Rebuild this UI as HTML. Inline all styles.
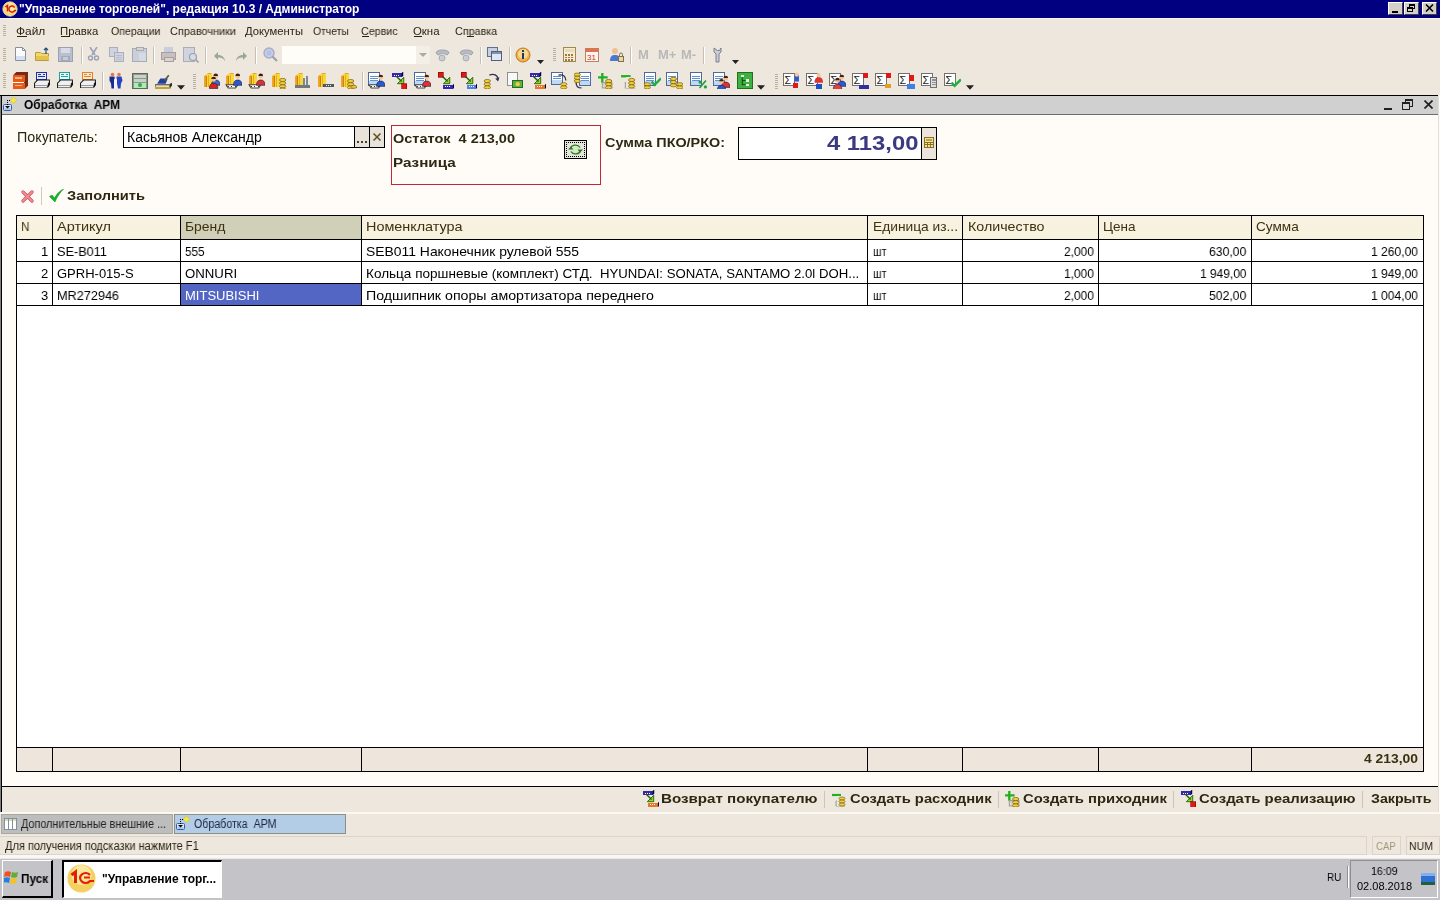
<!DOCTYPE html>
<html><head><meta charset="utf-8"><title>1C</title>
<style>
*{margin:0;padding:0;box-sizing:border-box}
html,body{width:1440px;height:900px;overflow:hidden}
body{position:relative;background:#eee7dd;font-family:'Liberation Sans',sans-serif}
.a{position:absolute;display:block}
.t{position:absolute;white-space:pre;font-family:'Liberation Sans',sans-serif;will-change:transform}
</style></head><body>
<div class="a" style="left:0px;top:0px;width:1440px;height:18px;background:#000080"></div>
<svg class="a" style="left:2px;top:1px" width="16" height="16" viewBox="0 0 16 16"><circle cx="8" cy="8" r="7.2" fill="#f6d878" stroke="#e8e0c0" stroke-width="0.8"/><circle cx="8" cy="7" r="5" fill="#fbe9a8"/><path d="M3.5 6l2-1.5v6" fill="none" stroke="#d02000" stroke-width="1.6"/><path d="M12.5 6.5a3 3 0 1 0 0 3h1.5" fill="none" stroke="#e01800" stroke-width="1.5"/></svg>
<div class="a" style="left:1388px;top:2px;width:15px;height:13px;background:#d4d0c8;border-top:1px solid #fff;border-left:1px solid #fff;border-right:1px solid #404040;border-bottom:1px solid #404040;box-sizing:border-box"></div>
<div class="a" style="left:1404px;top:2px;width:15px;height:13px;background:#d4d0c8;border-top:1px solid #fff;border-left:1px solid #fff;border-right:1px solid #404040;border-bottom:1px solid #404040;box-sizing:border-box"></div>
<div class="a" style="left:1422px;top:2px;width:15px;height:13px;background:#d4d0c8;border-top:1px solid #fff;border-left:1px solid #fff;border-right:1px solid #404040;border-bottom:1px solid #404040;box-sizing:border-box"></div>
<div class="a" style="left:1392px;top:11px;width:6px;height:2px;background:#000"></div>
<div class="a" style="left:1409px;top:4px;width:6px;height:5px;border:1px solid #000;border-top-width:2px;box-sizing:border-box;background:#d4d0c8"></div>
<div class="a" style="left:1407px;top:7px;width:6px;height:5px;border:1px solid #000;border-top-width:2px;box-sizing:border-box;background:#d4d0c8"></div>
<svg class="a" style="left:1425px;top:4px" width="9" height="8" viewBox="0 0 9 8"><path d="M1 0.5l7 7M8 0.5l-7 7" stroke="#000" stroke-width="1.6"/></svg>
<div class="a" style="left:0px;top:18px;width:1440px;height:77px;background:#eee7dd"></div>
<div class="a" style="left:0px;top:18px;width:1440px;height:1px;background:#f8f4ee"></div>
<div class="a" style="left:3px;top:25px;width:3px;height:1px;background:#b8b0a0"></div><div class="a" style="left:3px;top:27px;width:3px;height:1px;background:#b8b0a0"></div><div class="a" style="left:3px;top:29px;width:3px;height:1px;background:#b8b0a0"></div><div class="a" style="left:3px;top:31px;width:3px;height:1px;background:#b8b0a0"></div><div class="a" style="left:3px;top:33px;width:3px;height:1px;background:#b8b0a0"></div><div class="a" style="left:3px;top:35px;width:3px;height:1px;background:#b8b0a0"></div>
<div class="a" style="left:17px;top:36px;width:10px;height:1px;background:#2b2414"></div>
<div class="a" style="left:61px;top:36px;width:9px;height:1px;background:#2b2414"></div>
<div class="a" style="left:362px;top:36px;width:7px;height:1px;background:#2b2414"></div>
<div class="a" style="left:414px;top:36px;width:8px;height:1px;background:#2b2414"></div>
<div class="a" style="left:467px;top:36px;width:7px;height:1px;background:#2b2414"></div>
<div class="a" style="left:3px;top:48px;width:3px;height:1px;background:#b8b0a0"></div><div class="a" style="left:3px;top:50px;width:3px;height:1px;background:#b8b0a0"></div><div class="a" style="left:3px;top:52px;width:3px;height:1px;background:#b8b0a0"></div><div class="a" style="left:3px;top:54px;width:3px;height:1px;background:#b8b0a0"></div><div class="a" style="left:3px;top:56px;width:3px;height:1px;background:#b8b0a0"></div><div class="a" style="left:3px;top:58px;width:3px;height:1px;background:#b8b0a0"></div><div class="a" style="left:3px;top:60px;width:3px;height:1px;background:#b8b0a0"></div>
<svg class="a" style="left:14px;top:47px" width="15" height="15" viewBox="0 0 15 15"><path d="M1.5 .5h7l3 3v10h-10z" fill="#fafcff" stroke="#8a8f9c" stroke-width="1" /><rect x="2" y="9" width="9" height="4" fill="#d6e0f4" shape-rendering="crispEdges"/><path d="M8.5 .5v3h3" fill="none" stroke="#8a8f9c" stroke-width="1" /></svg>
<svg class="a" style="left:35px;top:47px" width="15" height="15" viewBox="0 0 15 15"><path d="M.5 5.5h5l1 1h7v7h-13z" fill="#efd870" stroke="#b89a40" stroke-width="1" /><rect x="1" y="9" width="13" height="4" fill="#e6c24a" shape-rendering="crispEdges"/><path d="M11 1v6M9 3l2-2 2 2" fill="none" stroke="#2a4a7a" stroke-width="1.2" /></svg>
<svg class="a" style="left:58px;top:47px" width="15" height="15" viewBox="0 0 15 15"><rect x="0.5" y="0.5" width="14" height="14" fill="#b9bfcc" stroke="#9aa2b2" stroke-width="1" shape-rendering="crispEdges"/><rect x="3" y="1" width="9" height="5" fill="#d8dce6" shape-rendering="crispEdges"/><rect x="3" y="9" width="9" height="5" fill="#a4abba" shape-rendering="crispEdges"/><rect x="5" y="10" width="5" height="3" fill="#c8ccd6" shape-rendering="crispEdges"/></svg>
<div class="a" style="left:81px;top:47px;width:1px;height:17px;background:#c8c0b4"></div><div class="a" style="left:82px;top:47px;width:1px;height:17px;background:#fff"></div>
<svg class="a" style="left:87px;top:47px" width="15" height="15" viewBox="0 0 15 15"><path d="M3 0l5 8M10 0L5 8" fill="none" stroke="#9aa2b6" stroke-width="1.6" /><circle cx="3.5" cy="11" r="2" fill="none" stroke="#9aa2b6" stroke-width="1.4"/><circle cx="9.5" cy="11" r="2" fill="none" stroke="#9aa2b6" stroke-width="1.4"/></svg>
<svg class="a" style="left:109px;top:47px" width="15" height="15" viewBox="0 0 15 15"><rect x="0.5" y="0.5" width="8" height="9" fill="#cfd4e0" stroke="#a8aebd" stroke-width="1" shape-rendering="crispEdges"/><rect x="5.5" y="5.5" width="9" height="9" fill="#cfd4e0" stroke="#a8aebd" stroke-width="1" shape-rendering="crispEdges"/><rect x="7" y="8" width="6" height="1" fill="#b8bdc9" shape-rendering="crispEdges"/><rect x="7" y="10" width="6" height="1" fill="#b8bdc9" shape-rendering="crispEdges"/><rect x="7" y="12" width="6" height="1" fill="#b8bdc9" shape-rendering="crispEdges"/></svg>
<svg class="a" style="left:132px;top:47px" width="15" height="15" viewBox="0 0 15 15"><rect x="0.5" y="1.5" width="14" height="13" fill="#c9ced9" stroke="#a4aab8" stroke-width="1" shape-rendering="crispEdges"/><rect x="4" y="0" width="7" height="3" fill="#d9d6c4" stroke="#a4aab8" stroke-width="1" shape-rendering="crispEdges"/><rect x="7" y="6" width="7" height="8" fill="#d6dae4" shape-rendering="crispEdges"/></svg>
<div class="a" style="left:153px;top:47px;width:1px;height:17px;background:#c8c0b4"></div><div class="a" style="left:154px;top:47px;width:1px;height:17px;background:#fff"></div>
<svg class="a" style="left:161px;top:47px" width="16" height="16" viewBox="0 0 16 16"><rect x="3" y="0" width="9" height="6" fill="#c7cfde" shape-rendering="crispEdges"/><rect x="0.5" y="5.5" width="14" height="7" fill="#c8c0c0" stroke="#a89e9e" stroke-width="1" shape-rendering="crispEdges"/><rect x="3" y="10" width="9" height="4" fill="#d8d4d0" stroke="#a89e9e" stroke-width="1" shape-rendering="crispEdges"/></svg>
<svg class="a" style="left:183px;top:47px" width="16" height="16" viewBox="0 0 16 16"><rect x="0.5" y="0.5" width="11" height="14" fill="#d0d4de" stroke="#a8adba" stroke-width="1" shape-rendering="crispEdges"/><circle cx="10" cy="10" r="3.5" fill="#d6dbe6" stroke="#9aa0b0" stroke-width="1.2"/><path d="M12.5 12.5l3 3" fill="none" stroke="#9aa0b0" stroke-width="1.6" /></svg>
<div class="a" style="left:205px;top:47px;width:1px;height:17px;background:#c8c0b4"></div><div class="a" style="left:206px;top:47px;width:1px;height:17px;background:#fff"></div>
<svg class="a" style="left:214px;top:49px" width="13" height="13" viewBox="0 0 13 13"><path d="M4 3L0 7l4 4V8.5c4 0 6 1 7 4 0-4-3-6.5-7-6.5z" fill="#9aa89a" /></svg>
<svg class="a" style="left:235px;top:49px" width="13" height="13" viewBox="0 0 13 13"><path d="M8 3l4 4-4 4V8.5c-4 0-6 1-7 4 0-4 3-6.5 7-6.5z" fill="#9aa89a" /></svg>
<div class="a" style="left:255px;top:47px;width:1px;height:17px;background:#c8c0b4"></div><div class="a" style="left:256px;top:47px;width:1px;height:17px;background:#fff"></div>
<svg class="a" style="left:263px;top:47px" width="15" height="15" viewBox="0 0 15 15"><circle cx="6" cy="6" r="5" fill="#c6cde4" stroke="#a8aec4" stroke-width="1.5"/><circle cx="6" cy="6" r="2.5" fill="#b0c0e8"/><path d="M9.5 9.5l4.5 4.5" fill="none" stroke="#9aa0b0" stroke-width="2.2" /></svg>
<div class="a" style="left:282px;top:46px;width:134px;height:18px;background:#fffdf8"></div>
<div class="a" style="left:416px;top:46px;width:14px;height:18px;background:#f4efe6"></div>
<svg class="a" style="left:419px;top:53px" width="8" height="5" viewBox="0 0 8 5"><path d="M0 0h8l-4 4z" fill="#b0a898"/></svg>
<svg class="a" style="left:435px;top:48px" width="16" height="14" viewBox="0 0 16 14"><path d="M1 5c0-4 13-4 13 0l-2 2-2-1c-2-1-3-1-5 0l-2 1z" fill="#b8bcc4" stroke="#a0a4ac" stroke-width="1" /><circle cx="7" cy="10" r="3" fill="#c8ccd4" stroke="#a8acb4" stroke-width="1"/></svg>
<svg class="a" style="left:459px;top:48px" width="16" height="14" viewBox="0 0 16 14"><path d="M1 5c0-4 13-4 13 0l-2 2-2-1c-2-1-3-1-5 0l-2 1z" fill="#b8bcc4" stroke="#a0a4ac" stroke-width="1" /><circle cx="7" cy="10" r="3" fill="#c8ccd4" stroke="#a8acb4" stroke-width="1"/></svg>
<div class="a" style="left:480px;top:47px;width:1px;height:17px;background:#c8c0b4"></div><div class="a" style="left:481px;top:47px;width:1px;height:17px;background:#fff"></div>
<svg class="a" style="left:487px;top:47px" width="15" height="15" viewBox="0 0 15 15"><rect x="0.5" y="0.5" width="10" height="9" fill="#c8d0e0" stroke="#607090" stroke-width="1" shape-rendering="crispEdges"/><rect x="4.5" y="4.5" width="10" height="9" fill="#e0e6f2" stroke="#506080" stroke-width="1" shape-rendering="crispEdges"/><rect x="5" y="5" width="9" height="2" fill="#8090b0" shape-rendering="crispEdges"/></svg>
<div class="a" style="left:509px;top:47px;width:1px;height:17px;background:#c8c0b4"></div><div class="a" style="left:510px;top:47px;width:1px;height:17px;background:#fff"></div>
<svg class="a" style="left:515px;top:47px" width="16" height="16" viewBox="0 0 16 16"><circle cx="8" cy="8" r="7" fill="#f2b24a" stroke="#c07820" stroke-width="1"/><circle cx="8" cy="7" r="5" fill="#f8d890"/><rect x="7" y="6" width="2" height="6" fill="#1a3a6a" shape-rendering="crispEdges"/><rect x="7" y="3" width="2" height="2" fill="#1a3a6a" shape-rendering="crispEdges"/></svg>
<svg class="a" style="left:537px;top:60px" width="7" height="4" viewBox="0 0 7 4"><path d="M0 0h7l-3.5 4z" fill="#222" /></svg>
<div class="a" style="left:553px;top:48px;width:3px;height:1px;background:#b8b0a0"></div><div class="a" style="left:553px;top:50px;width:3px;height:1px;background:#b8b0a0"></div><div class="a" style="left:553px;top:52px;width:3px;height:1px;background:#b8b0a0"></div><div class="a" style="left:553px;top:54px;width:3px;height:1px;background:#b8b0a0"></div><div class="a" style="left:553px;top:56px;width:3px;height:1px;background:#b8b0a0"></div><div class="a" style="left:553px;top:58px;width:3px;height:1px;background:#b8b0a0"></div><div class="a" style="left:553px;top:60px;width:3px;height:1px;background:#b8b0a0"></div>
<svg class="a" style="left:563px;top:47px" width="13" height="15" viewBox="0 0 13 15"><rect x="0.5" y="0.5" width="12" height="14" fill="#f4ecd4" stroke="#a08850" stroke-width="1" shape-rendering="crispEdges"/><rect x="2" y="2" width="9" height="3" fill="#e8dcb8" shape-rendering="crispEdges"/><rect x="2" y="7.0" width="2" height="1.5" fill="#a07840" shape-rendering="crispEdges"/><rect x="2" y="9.5" width="2" height="1.5" fill="#a07840" shape-rendering="crispEdges"/><rect x="2" y="12.0" width="2" height="1.5" fill="#a07840" shape-rendering="crispEdges"/><rect x="5" y="7.0" width="2" height="1.5" fill="#a07840" shape-rendering="crispEdges"/><rect x="5" y="9.5" width="2" height="1.5" fill="#a07840" shape-rendering="crispEdges"/><rect x="5" y="12.0" width="2" height="1.5" fill="#a07840" shape-rendering="crispEdges"/><rect x="8" y="7.0" width="2" height="1.5" fill="#a07840" shape-rendering="crispEdges"/><rect x="8" y="9.5" width="2" height="1.5" fill="#a07840" shape-rendering="crispEdges"/><rect x="8" y="12.0" width="2" height="1.5" fill="#a07840" shape-rendering="crispEdges"/></svg>
<svg class="a" style="left:585px;top:47px" width="14" height="15" viewBox="0 0 14 15"><rect x="0.5" y="1.5" width="13" height="13" fill="#fdf4ec" stroke="#c08060" stroke-width="1" shape-rendering="crispEdges"/><rect x="1" y="2" width="12" height="3" fill="#e07050" shape-rendering="crispEdges"/><text x="2" y="13" font-size="8" font-family="Liberation Sans" fill="#d03020">31</text></svg>
<svg class="a" style="left:609px;top:47px" width="15" height="15" viewBox="0 0 15 15"><circle cx="6" cy="4" r="3" fill="#f0c090"/><path d="M1 14c0-5 2-6 5-6s5 1 5 6z" fill="#4a7ad0" /><rect x="9.5" y="9.5" width="5" height="5" fill="#e8d8a0" stroke="#807050" stroke-width="1" shape-rendering="crispEdges"/><path d="M10.5 9.5v-2a1.5 1.5 0 0 1 3 0v2" fill="none" stroke="#807050" stroke-width="1" /></svg>
<div class="a" style="left:630px;top:47px;width:1px;height:17px;background:#c8c0b4"></div><div class="a" style="left:631px;top:47px;width:1px;height:17px;background:#fff"></div>
<div class="t" style="left:638px;top:47px;font:bold 13px/15px 'Liberation Sans';color:#b8b8b8">M</div>
<div class="t" style="left:658px;top:47px;font:bold 13px/15px 'Liberation Sans';color:#b8b8b8">M+</div>
<div class="t" style="left:681px;top:47px;font:bold 13px/15px 'Liberation Sans';color:#b8b8b8">M-</div>
<div class="a" style="left:703px;top:47px;width:1px;height:17px;background:#c8c0b4"></div><div class="a" style="left:704px;top:47px;width:1px;height:17px;background:#fff"></div>
<svg class="a" style="left:710px;top:47px" width="16" height="16" viewBox="0 0 16 16"><path d="M4 1v4l2 2v8h3V7l2-2V1L9.5 3.5h-2z" fill="#c8ccd4" stroke="#7a8090" stroke-width="1" /></svg>
<svg class="a" style="left:732px;top:60px" width="7" height="4" viewBox="0 0 7 4"><path d="M0 0h7l-3.5 4z" fill="#222" /></svg>
<div class="a" style="left:3px;top:73px;width:3px;height:1px;background:#b8b0a0"></div><div class="a" style="left:3px;top:75px;width:3px;height:1px;background:#b8b0a0"></div><div class="a" style="left:3px;top:77px;width:3px;height:1px;background:#b8b0a0"></div><div class="a" style="left:3px;top:79px;width:3px;height:1px;background:#b8b0a0"></div><div class="a" style="left:3px;top:81px;width:3px;height:1px;background:#b8b0a0"></div><div class="a" style="left:3px;top:83px;width:3px;height:1px;background:#b8b0a0"></div><div class="a" style="left:3px;top:85px;width:3px;height:1px;background:#b8b0a0"></div><div class="a" style="left:3px;top:87px;width:3px;height:1px;background:#b8b0a0"></div>
<svg class="a" style="left:11px;top:72px" width="17" height="17" viewBox="0 0 16 16"><path d="M2 3l3-3h11v13l-3 3H2z" fill="#7a2818" /><rect x="2" y="3" width="11" height="6" fill="#e85a18" shape-rendering="crispEdges"/><rect x="2" y="10" width="11" height="6" fill="#e85a18" shape-rendering="crispEdges"/><rect x="4" y="5" width="6" height="1.5" fill="#ffb080" shape-rendering="crispEdges"/><rect x="4" y="12" width="6" height="1.5" fill="#ffb080" shape-rendering="crispEdges"/><rect x="1" y="9" width="11" height="1.5" fill="#ffffff" shape-rendering="crispEdges"/></svg>
<svg class="a" style="left:34px;top:72px" width="17" height="17" viewBox="0 0 16 16"><rect x="2.5" y="0.5" width="9" height="7" fill="#e0e8ff" stroke="#2030a0" stroke-width="1" shape-rendering="crispEdges"/><rect x="4" y="2" width="3" height="1" fill="#2030a0" shape-rendering="crispEdges"/><rect x="4" y="4" width="6" height="1" fill="#2030a0" shape-rendering="crispEdges"/><rect x="8" y="2" width="2" height="1" fill="#2030a0" shape-rendering="crispEdges"/><path d="M.5 10.5l3-3h11v4l-2 3H.5z" fill="#f0f0f0" stroke="#202020" stroke-width="1" /><rect x="1" y="12" width="12" height="1" fill="#9a9a9a" shape-rendering="crispEdges"/><rect x="1" y="14" width="12" height="1" fill="#808080" shape-rendering="crispEdges"/><path d="M13 11l2-2.5v3.5l-2 3z" fill="#101010" /></svg>
<svg class="a" style="left:57px;top:72px" width="17" height="17" viewBox="0 0 16 16"><rect x="2.5" y="0.5" width="9" height="7" fill="#e8ffff" stroke="#20a0a0" stroke-width="1" shape-rendering="crispEdges"/><rect x="4" y="2" width="3" height="1" fill="#20a0a0" shape-rendering="crispEdges"/><rect x="4" y="4" width="6" height="1" fill="#20a0a0" shape-rendering="crispEdges"/><rect x="8" y="2" width="2" height="1" fill="#20a0a0" shape-rendering="crispEdges"/><path d="M.5 10.5l3-3h11v4l-2 3H.5z" fill="#f0f0f0" stroke="#202020" stroke-width="1" /><rect x="1" y="12" width="12" height="1" fill="#9a9a9a" shape-rendering="crispEdges"/><rect x="1" y="14" width="12" height="1" fill="#808080" shape-rendering="crispEdges"/><path d="M13 11l2-2.5v3.5l-2 3z" fill="#101010" /></svg>
<svg class="a" style="left:80px;top:72px" width="17" height="17" viewBox="0 0 16 16"><rect x="2.5" y="0.5" width="9" height="7" fill="#ffe8c8" stroke="#e08030" stroke-width="1" shape-rendering="crispEdges"/><rect x="4" y="2" width="3" height="1" fill="#e08030" shape-rendering="crispEdges"/><rect x="4" y="4" width="6" height="1" fill="#e08030" shape-rendering="crispEdges"/><rect x="8" y="2" width="2" height="1" fill="#e08030" shape-rendering="crispEdges"/><path d="M.5 10.5l3-3h11v4l-2 3H.5z" fill="#f0f0f0" stroke="#202020" stroke-width="1" /><rect x="1" y="12" width="12" height="1" fill="#9a9a9a" shape-rendering="crispEdges"/><rect x="1" y="14" width="12" height="1" fill="#808080" shape-rendering="crispEdges"/><path d="M13 11l2-2.5v3.5l-2 3z" fill="#101010" /></svg>
<div class="a" style="left:102px;top:72px;width:1px;height:18px;background:#c8c0b4"></div><div class="a" style="left:103px;top:72px;width:1px;height:18px;background:#fff"></div>
<svg class="a" style="left:108px;top:72px" width="16" height="17" viewBox="0 0 16 16"><circle cx="4.5" cy="2" r="1.8" fill="#e07850"/><circle cx="11" cy="2" r="1.8" fill="#e07850"/><path d="M1.5 4h5l.5 7-1 5H3.5l-.5-5-1.5-3z" fill="#1a2a90" /><path d="M8.5 4h5l1 4-1.5 3-.5 5h-2.5l-1-5z" fill="#2a44c0" /><path d="M6 7l1.5-1 1.5 1v9h-3z" fill="#f0f4ff" /></svg>
<svg class="a" style="left:132px;top:72px" width="16" height="17" viewBox="0 0 16 16"><rect x="0.5" y="0.5" width="15" height="15" fill="#8a9a8a" stroke="#606860" stroke-width="1" shape-rendering="crispEdges"/><rect x="2" y="2" width="12" height="3" fill="#cad0ca" shape-rendering="crispEdges"/><rect x="2" y="6" width="12" height="3" fill="#cad0ca" shape-rendering="crispEdges"/><rect x="2" y="10" width="12" height="5" fill="#a8f0b0" shape-rendering="crispEdges"/><circle cx="8" cy="12.5" r="2" fill="#40a060"/></svg>
<svg class="a" style="left:155px;top:72px" width="17" height="17" viewBox="0 0 16 16"><path d="M2 11l3-5h7l-2 5z" fill="#2040a0" /><path d="M9 8l4-5" fill="none" stroke="#506040" stroke-width="1.6" /><path d="M0 12h14v3H0z" fill="#e8e0b0" stroke="#404040" stroke-width="1" /><rect x="0" y="14" width="14" height="2" fill="#c0a040" shape-rendering="crispEdges"/><path d="M14 11v4l2-2v-3z" fill="#303030" /></svg>
<svg class="a" style="left:177px;top:85px" width="8" height="5" viewBox="0 0 7 4"><path d="M0 0h7l-3.5 4z" fill="#222" /></svg>
<div class="a" style="left:193px;top:74px;width:3px;height:1px;background:#b8b0a0"></div><div class="a" style="left:193px;top:76px;width:3px;height:1px;background:#b8b0a0"></div><div class="a" style="left:193px;top:78px;width:3px;height:1px;background:#b8b0a0"></div><div class="a" style="left:193px;top:80px;width:3px;height:1px;background:#b8b0a0"></div><div class="a" style="left:193px;top:82px;width:3px;height:1px;background:#b8b0a0"></div><div class="a" style="left:193px;top:84px;width:3px;height:1px;background:#b8b0a0"></div><div class="a" style="left:193px;top:86px;width:3px;height:1px;background:#b8b0a0"></div><div class="a" style="left:193px;top:88px;width:3px;height:1px;background:#b8b0a0"></div>
<svg class="a" style="left:203px;top:72px" width="17" height="17" viewBox="0 0 16 16"><path d="M1 4l4-3h3v13H1z" fill="#f0a020" /><rect x="3" y="2" width="5" height="12" fill="#f8d838" shape-rendering="crispEdges"/><rect x="3" y="4" width="1" height="10" fill="#d08010" shape-rendering="crispEdges"/><rect x="5" y="3" width="1" height="11" fill="#e0b020" shape-rendering="crispEdges"/><path d="M8 12.5c0-3.5 1.5-5 4-5s4 1.5 4 5z" fill="#3a6ad0" stroke="#202040" stroke-width="0.6" /><circle cx="12" cy="4" r="2.2" fill="#f4c090"/><path d="M9.8 3.7a2.2 2.2 0 0 1 4.4 0" fill="#402010" /><path d="M6 15.5c0-3.5 1.5-5 4-5s4 1.5 4 5z" fill="#e02020" stroke="#202040" stroke-width="0.6" /><circle cx="10" cy="7" r="2.2" fill="#f4c090"/><path d="M7.8 6.7a2.2 2.2 0 0 1 4.4 0" fill="#402010" /></svg>
<svg class="a" style="left:225px;top:72px" width="17" height="17" viewBox="0 0 16 16"><path d="M1 4l4-3h3v13H1z" fill="#f0a020" /><rect x="3" y="2" width="5" height="12" fill="#f8d838" shape-rendering="crispEdges"/><rect x="3" y="4" width="1" height="10" fill="#d08010" shape-rendering="crispEdges"/><rect x="5" y="3" width="1" height="11" fill="#e0b020" shape-rendering="crispEdges"/><path d="M1 12h11l-2 3H3z" fill="#ffffff" stroke="#404040" stroke-width="1" /><rect x="3" y="13" width="1" height="1" fill="#333" shape-rendering="crispEdges"/><rect x="6" y="13" width="1" height="1" fill="#333" shape-rendering="crispEdges"/><rect x="9" y="13" width="1" height="1" fill="#333" shape-rendering="crispEdges"/><path d="M8 12.5c0-3.5 1.5-5 4-5s4 1.5 4 5z" fill="#2a5ad0" stroke="#202040" stroke-width="0.6" /><circle cx="12" cy="4" r="2.2" fill="#f4c090"/><path d="M9.8 3.7a2.2 2.2 0 0 1 4.4 0" fill="#402010" /></svg>
<svg class="a" style="left:248px;top:72px" width="17" height="17" viewBox="0 0 16 16"><path d="M1 4l4-3h3v13H1z" fill="#f0a020" /><rect x="3" y="2" width="5" height="12" fill="#f8d838" shape-rendering="crispEdges"/><rect x="3" y="4" width="1" height="10" fill="#d08010" shape-rendering="crispEdges"/><rect x="5" y="3" width="1" height="11" fill="#e0b020" shape-rendering="crispEdges"/><path d="M1 12h11l-2 3H3z" fill="#ffffff" stroke="#404040" stroke-width="1" /><rect x="3" y="13" width="1" height="1" fill="#333" shape-rendering="crispEdges"/><rect x="6" y="13" width="1" height="1" fill="#333" shape-rendering="crispEdges"/><rect x="9" y="13" width="1" height="1" fill="#333" shape-rendering="crispEdges"/><path d="M8 12.5c0-3.5 1.5-5 4-5s4 1.5 4 5z" fill="#e03030" stroke="#202040" stroke-width="0.6" /><circle cx="12" cy="4" r="2.2" fill="#f4c090"/><path d="M9.8 3.7a2.2 2.2 0 0 1 4.4 0" fill="#402010" /></svg>
<svg class="a" style="left:271px;top:72px" width="17" height="17" viewBox="0 0 16 16"><path d="M1 4l4-3h3v13H1z" fill="#f0a020" /><rect x="3" y="2" width="5" height="12" fill="#f8d838" shape-rendering="crispEdges"/><rect x="3" y="4" width="1" height="10" fill="#d08010" shape-rendering="crispEdges"/><rect x="5" y="3" width="1" height="11" fill="#e0b020" shape-rendering="crispEdges"/><ellipse cx="11" cy="7.5" rx="3" ry="1.5" fill="#f0d040" stroke="#806010" stroke-width="0.7"/><ellipse cx="11" cy="10.5" rx="3" ry="1.5" fill="#f0d040" stroke="#806010" stroke-width="0.7"/><ellipse cx="11" cy="13.5" rx="3" ry="1.5" fill="#f0d040" stroke="#806010" stroke-width="0.7"/><ellipse cx="11" cy="16.5" rx="3" ry="1.5" fill="#f0d040" stroke="#806010" stroke-width="0.7"/></svg>
<svg class="a" style="left:294px;top:72px" width="17" height="17" viewBox="0 0 16 16"><path d="M1 4l4-3h3v13H1z" fill="#f0a020" /><rect x="3" y="2" width="5" height="12" fill="#f8d838" shape-rendering="crispEdges"/><rect x="3" y="4" width="1" height="10" fill="#d08010" shape-rendering="crispEdges"/><rect x="5" y="3" width="1" height="11" fill="#e0b020" shape-rendering="crispEdges"/><rect x="8" y="6" width="2" height="8" fill="#808890" shape-rendering="crispEdges"/><rect x="11" y="4" width="2" height="10" fill="#808890" shape-rendering="crispEdges"/><rect x="1" y="12" width="14" height="3" fill="#707880" shape-rendering="crispEdges"/></svg>
<svg class="a" style="left:317px;top:72px" width="17" height="17" viewBox="0 0 16 16"><path d="M1 4l4-3h3v13H1z" fill="#f0a020" /><rect x="3" y="2" width="5" height="12" fill="#f8d838" shape-rendering="crispEdges"/><rect x="3" y="4" width="1" height="10" fill="#d08010" shape-rendering="crispEdges"/><rect x="5" y="3" width="1" height="11" fill="#e0b020" shape-rendering="crispEdges"/><rect x="6" y="11" width="10" height="3" fill="#505860" shape-rendering="crispEdges"/><rect x="8" y="12" width="1" height="1" fill="#eee" shape-rendering="crispEdges"/><rect x="10" y="12" width="1" height="1" fill="#eee" shape-rendering="crispEdges"/><rect x="12" y="12" width="1" height="1" fill="#eee" shape-rendering="crispEdges"/></svg>
<svg class="a" style="left:340px;top:72px" width="17" height="17" viewBox="0 0 16 16"><path d="M1 4l4-3h3v13H1z" fill="#f0a020" /><rect x="3" y="2" width="5" height="12" fill="#f8d838" shape-rendering="crispEdges"/><rect x="3" y="4" width="1" height="10" fill="#d08010" shape-rendering="crispEdges"/><rect x="5" y="3" width="1" height="11" fill="#e0b020" shape-rendering="crispEdges"/><ellipse cx="10" cy="8.5" rx="3" ry="1.5" fill="#f0d040" stroke="#806010" stroke-width="0.7"/><ellipse cx="10" cy="11.5" rx="3" ry="1.5" fill="#f0d040" stroke="#806010" stroke-width="0.7"/><ellipse cx="10" cy="14.5" rx="3" ry="1.5" fill="#f0d040" stroke="#806010" stroke-width="0.7"/><ellipse cx="13" cy="14" rx="3" ry="1.3" fill="#f0d040" stroke="#806010" stroke-width="0.7"/></svg>
<div class="a" style="left:362px;top:72px;width:1px;height:18px;background:#c8c0b4"></div><div class="a" style="left:363px;top:72px;width:1px;height:18px;background:#fff"></div>
<svg class="a" style="left:368px;top:72px" width="17" height="17" viewBox="0 0 16 16"><rect x="0.5" y="0.5" width="10" height="12" fill="#ffffff" stroke="#4a6aa0" stroke-width="1" shape-rendering="crispEdges"/><rect x="2.0" y="3.5" width="7" height="1" fill="#6090d0" shape-rendering="crispEdges"/><rect x="2.0" y="5.5" width="7" height="1" fill="#6090d0" shape-rendering="crispEdges"/><rect x="2.0" y="7.5" width="7" height="1" fill="#6090d0" shape-rendering="crispEdges"/><rect x="1.0" y="8.5" width="9" height="3.5" fill="#c0d8f0" shape-rendering="crispEdges"/><path d="M1 12h11l-2 3H3z" fill="#ffffff" stroke="#404040" stroke-width="1" /><rect x="3" y="13" width="1" height="1" fill="#333" shape-rendering="crispEdges"/><rect x="6" y="13" width="1" height="1" fill="#333" shape-rendering="crispEdges"/><rect x="9" y="13" width="1" height="1" fill="#333" shape-rendering="crispEdges"/><path d="M8 13.5c0-3.5 1.5-5 4-5s4 1.5 4 5z" fill="#2a5ad0" stroke="#202040" stroke-width="0.6" /><circle cx="12" cy="5" r="2.2" fill="#f4c090"/><path d="M9.8 4.7a2.2 2.2 0 0 1 4.4 0" fill="#402010" /></svg>
<svg class="a" style="left:391px;top:72px" width="17" height="17" viewBox="0 0 16 16"><rect x="1" y="1" width="9" height="4" fill="#3428b0" shape-rendering="crispEdges"/><path d="M10 1l1.5-1.5v4l-1.5 1.5z" fill="#000040" /><rect x="2.5" y="2.5" width="1" height="1" fill="#ffffff" shape-rendering="crispEdges"/><rect x="4.5" y="2.5" width="1" height="1" fill="#ffffff" shape-rendering="crispEdges"/><rect x="6.5" y="2.5" width="1" height="1" fill="#ffffff" shape-rendering="crispEdges"/><path d="M6 11h6v-6z" fill="#90d820" stroke="#1a5a00" stroke-width="0.8" /><path d="M5 4l5 5" fill="none" stroke="#1a5a00" stroke-width="1.2" /><rect x="10" y="11" width="5" height="5" fill="#e01818" stroke="#900000" stroke-width="0.6" shape-rendering="crispEdges"/></svg>
<svg class="a" style="left:414px;top:72px" width="17" height="17" viewBox="0 0 16 16"><rect x="0.5" y="0.5" width="10" height="12" fill="#ffffff" stroke="#4a6aa0" stroke-width="1" shape-rendering="crispEdges"/><rect x="2.0" y="3.5" width="7" height="1" fill="#6090d0" shape-rendering="crispEdges"/><rect x="2.0" y="5.5" width="7" height="1" fill="#6090d0" shape-rendering="crispEdges"/><rect x="2.0" y="7.5" width="7" height="1" fill="#6090d0" shape-rendering="crispEdges"/><rect x="1.0" y="8.5" width="9" height="3.5" fill="#c0d8f0" shape-rendering="crispEdges"/><path d="M1 12h11l-2 3H3z" fill="#ffffff" stroke="#404040" stroke-width="1" /><rect x="3" y="13" width="1" height="1" fill="#333" shape-rendering="crispEdges"/><rect x="6" y="13" width="1" height="1" fill="#333" shape-rendering="crispEdges"/><rect x="9" y="13" width="1" height="1" fill="#333" shape-rendering="crispEdges"/><path d="M8 13.5c0-3.5 1.5-5 4-5s4 1.5 4 5z" fill="#e03030" stroke="#202040" stroke-width="0.6" /><circle cx="12" cy="5" r="2.2" fill="#f4c090"/><path d="M9.8 4.7a2.2 2.2 0 0 1 4.4 0" fill="#402010" /></svg>
<svg class="a" style="left:437px;top:72px" width="17" height="17" viewBox="0 0 16 16"><rect x="1" y="0" width="5" height="5" fill="#e01818" stroke="#900000" stroke-width="0.6" shape-rendering="crispEdges"/><path d="M6 11h6v-6z" fill="#90d820" stroke="#1a5a00" stroke-width="0.8" /><path d="M5 4l5 5" fill="none" stroke="#1a5a00" stroke-width="1.2" /><rect x="6" y="12" width="9" height="4" fill="#3428b0" shape-rendering="crispEdges"/><path d="M15 12l1.5-1.5v4l-1.5 1.5z" fill="#000040" /><rect x="7.5" y="13.5" width="1" height="1" fill="#ffffff" shape-rendering="crispEdges"/><rect x="9.5" y="13.5" width="1" height="1" fill="#ffffff" shape-rendering="crispEdges"/><rect x="11.5" y="13.5" width="1" height="1" fill="#ffffff" shape-rendering="crispEdges"/></svg>
<svg class="a" style="left:460px;top:72px" width="17" height="17" viewBox="0 0 16 16"><rect x="1" y="0" width="5" height="5" fill="#e01818" stroke="#900000" stroke-width="0.6" shape-rendering="crispEdges"/><path d="M6 11h6v-6z" fill="#90d820" stroke="#1a5a00" stroke-width="0.8" /><path d="M5 4l5 5" fill="none" stroke="#1a5a00" stroke-width="1.2" /><rect x="7" y="12" width="8" height="4" fill="#4a80e8" shape-rendering="crispEdges"/><path d="M15 12l1.5-1.5v4l-1.5 1.5z" fill="#000040" /><rect x="8.5" y="13.5" width="1" height="1" fill="#ffffff" shape-rendering="crispEdges"/><rect x="10.5" y="13.5" width="1" height="1" fill="#ffffff" shape-rendering="crispEdges"/><rect x="12.5" y="13.5" width="1" height="1" fill="#ffffff" shape-rendering="crispEdges"/></svg>
<svg class="a" style="left:483px;top:72px" width="17" height="17" viewBox="0 0 16 16"><ellipse cx="4" cy="8.5" rx="3" ry="1.5" fill="#f0d040" stroke="#806010" stroke-width="0.7"/><ellipse cx="4" cy="11.5" rx="3" ry="1.5" fill="#f0d040" stroke="#806010" stroke-width="0.7"/><ellipse cx="4" cy="14.5" rx="3" ry="1.5" fill="#f0d040" stroke="#806010" stroke-width="0.7"/><path d="M6 3c4-2 8 0 8 4" fill="none" stroke="#303050" stroke-width="1.2" /><path d="M12 6l2 2 1-3" fill="none" stroke="#303050" stroke-width="1" /></svg>
<svg class="a" style="left:506px;top:72px" width="17" height="17" viewBox="0 0 16 16"><rect x="1.5" y="0.5" width="9" height="12" fill="#f8f8f8" stroke="#909090" stroke-width="1" shape-rendering="crispEdges"/><rect x="6" y="8" width="10" height="7" fill="#60b040" stroke="#207020" stroke-width="1" shape-rendering="crispEdges"/><circle cx="11" cy="11.5" r="2" fill="#f0d040"/></svg>
<svg class="a" style="left:529px;top:72px" width="17" height="17" viewBox="0 0 16 16"><rect x="1" y="1" width="9" height="4" fill="#3428b0" shape-rendering="crispEdges"/><path d="M10 1l1.5-1.5v4l-1.5 1.5z" fill="#000040" /><rect x="2.5" y="2.5" width="1" height="1" fill="#ffffff" shape-rendering="crispEdges"/><rect x="4.5" y="2.5" width="1" height="1" fill="#ffffff" shape-rendering="crispEdges"/><rect x="6.5" y="2.5" width="1" height="1" fill="#ffffff" shape-rendering="crispEdges"/><path d="M5 11h6v-6z" fill="#90d820" stroke="#1a5a00" stroke-width="0.8" /><path d="M4 4l5 5" fill="none" stroke="#1a5a00" stroke-width="1.2" /><rect x="6" y="12" width="9" height="4" fill="#e87828" shape-rendering="crispEdges"/><path d="M15 12l1.5-1.5v4l-1.5 1.5z" fill="#000040" /><rect x="7.5" y="13.5" width="1" height="1" fill="#ffffff" shape-rendering="crispEdges"/><rect x="9.5" y="13.5" width="1" height="1" fill="#ffffff" shape-rendering="crispEdges"/><rect x="11.5" y="13.5" width="1" height="1" fill="#ffffff" shape-rendering="crispEdges"/></svg>
<svg class="a" style="left:551px;top:72px" width="17" height="17" viewBox="0 0 16 16"><rect x="0.5" y="0.5" width="10" height="11" fill="#ffffff" stroke="#4a6aa0" stroke-width="1" shape-rendering="crispEdges"/><rect x="2.0" y="3.5" width="7" height="1" fill="#6090d0" shape-rendering="crispEdges"/><rect x="2.0" y="5.5" width="7" height="1" fill="#6090d0" shape-rendering="crispEdges"/><rect x="2.0" y="7.5" width="7" height="1" fill="#6090d0" shape-rendering="crispEdges"/><rect x="1.0" y="7.5" width="9" height="3.5" fill="#c0d8f0" shape-rendering="crispEdges"/><path d="M7 3c4-1 7 1 7 5" fill="none" stroke="#303050" stroke-width="1.2" /><ellipse cx="12" cy="11.5" rx="3" ry="1.5" fill="#f0d040" stroke="#806010" stroke-width="0.7"/><ellipse cx="12" cy="14.5" rx="3" ry="1.5" fill="#f0d040" stroke="#806010" stroke-width="0.7"/></svg>
<svg class="a" style="left:574px;top:72px" width="17" height="17" viewBox="0 0 16 16"><rect x="5.5" y="0.5" width="10" height="12" fill="#ffffff" stroke="#4a6aa0" stroke-width="1" shape-rendering="crispEdges"/><rect x="7.0" y="3.5" width="7" height="1" fill="#6090d0" shape-rendering="crispEdges"/><rect x="7.0" y="5.5" width="7" height="1" fill="#6090d0" shape-rendering="crispEdges"/><rect x="7.0" y="7.5" width="7" height="1" fill="#6090d0" shape-rendering="crispEdges"/><rect x="6.0" y="8.5" width="9" height="3.5" fill="#c0d8f0" shape-rendering="crispEdges"/><ellipse cx="3" cy="2.5" rx="3" ry="1.5" fill="#f0d040" stroke="#806010" stroke-width="0.7"/><ellipse cx="3" cy="5.5" rx="3" ry="1.5" fill="#f0d040" stroke="#806010" stroke-width="0.7"/><ellipse cx="3" cy="8.5" rx="3" ry="1.5" fill="#f0d040" stroke="#806010" stroke-width="0.7"/><path d="M2 10c0 3 2 5 5 5" fill="none" stroke="#303050" stroke-width="1.2" /></svg>
<svg class="a" style="left:597px;top:72px" width="17" height="17" viewBox="0 0 16 16"><path d="M5 1v9M1 5h9" fill="none" stroke="#20b020" stroke-width="2.2" /><path d="M5 10h9v5H5z" fill="#d8d8d0" stroke="#a0a090" stroke-width="1" /><ellipse cx="11" cy="8.5" rx="3" ry="1.5" fill="#f0d040" stroke="#806010" stroke-width="0.7"/><ellipse cx="11" cy="11.5" rx="3" ry="1.5" fill="#f0d040" stroke="#806010" stroke-width="0.7"/><ellipse cx="11" cy="14.5" rx="3" ry="1.5" fill="#f0d040" stroke="#806010" stroke-width="0.7"/></svg>
<svg class="a" style="left:620px;top:72px" width="17" height="17" viewBox="0 0 16 16"><path d="M1 4h9" fill="none" stroke="#20b020" stroke-width="2.2" /><path d="M5 10h9v5H5z" fill="#d8d8d0" stroke="#a0a090" stroke-width="1" /><rect x="6" y="5" width="9" height="10" fill="#e8e8e0" shape-rendering="crispEdges"/><ellipse cx="11" cy="7.5" rx="3" ry="1.5" fill="#f0d040" stroke="#806010" stroke-width="0.7"/><ellipse cx="11" cy="10.5" rx="3" ry="1.5" fill="#f0d040" stroke="#806010" stroke-width="0.7"/><ellipse cx="11" cy="13.5" rx="3" ry="1.5" fill="#f0d040" stroke="#806010" stroke-width="0.7"/></svg>
<svg class="a" style="left:644px;top:72px" width="17" height="17" viewBox="0 0 16 16"><rect x="0.5" y="0.5" width="10" height="12" fill="#ffffff" stroke="#4a6aa0" stroke-width="1" shape-rendering="crispEdges"/><rect x="2.0" y="3.5" width="7" height="1" fill="#6090d0" shape-rendering="crispEdges"/><rect x="2.0" y="5.5" width="7" height="1" fill="#6090d0" shape-rendering="crispEdges"/><rect x="2.0" y="7.5" width="7" height="1" fill="#6090d0" shape-rendering="crispEdges"/><rect x="1.0" y="8.5" width="9" height="3.5" fill="#c0d8f0" shape-rendering="crispEdges"/><path d="M7 9l3 3 6-6" fill="none" stroke="#20b040" stroke-width="2.2" /><ellipse cx="3" cy="11.5" rx="3" ry="1.5" fill="#f0d040" stroke="#806010" stroke-width="0.7"/><ellipse cx="3" cy="14.5" rx="3" ry="1.5" fill="#f0d040" stroke="#806010" stroke-width="0.7"/></svg>
<svg class="a" style="left:666px;top:72px" width="17" height="17" viewBox="0 0 16 16"><rect x="0.5" y="0.5" width="10" height="12" fill="#ffffff" stroke="#4a6aa0" stroke-width="1" shape-rendering="crispEdges"/><rect x="2.0" y="3.5" width="7" height="1" fill="#6090d0" shape-rendering="crispEdges"/><rect x="2.0" y="5.5" width="7" height="1" fill="#6090d0" shape-rendering="crispEdges"/><rect x="2.0" y="7.5" width="7" height="1" fill="#6090d0" shape-rendering="crispEdges"/><rect x="1.0" y="8.5" width="9" height="3.5" fill="#c0d8f0" shape-rendering="crispEdges"/><ellipse cx="7" cy="6.5" rx="3" ry="1.5" fill="#f0d040" stroke="#806010" stroke-width="0.7"/><ellipse cx="7" cy="9.5" rx="3" ry="1.5" fill="#f0d040" stroke="#806010" stroke-width="0.7"/><ellipse cx="7" cy="12.5" rx="3" ry="1.5" fill="#f0d040" stroke="#806010" stroke-width="0.7"/><ellipse cx="13" cy="11.5" rx="3" ry="1.5" fill="#f0d040" stroke="#806010" stroke-width="0.7"/><ellipse cx="13" cy="14.5" rx="3" ry="1.5" fill="#f0d040" stroke="#806010" stroke-width="0.7"/></svg>
<svg class="a" style="left:690px;top:72px" width="17" height="17" viewBox="0 0 16 16"><rect x="0.5" y="0.5" width="10" height="12" fill="#ffffff" stroke="#4a6aa0" stroke-width="1" shape-rendering="crispEdges"/><rect x="2.0" y="3.5" width="7" height="1" fill="#6090d0" shape-rendering="crispEdges"/><rect x="2.0" y="5.5" width="7" height="1" fill="#6090d0" shape-rendering="crispEdges"/><rect x="2.0" y="7.5" width="7" height="1" fill="#6090d0" shape-rendering="crispEdges"/><rect x="1.0" y="8.5" width="9" height="3.5" fill="#c0d8f0" shape-rendering="crispEdges"/><path d="M9 15l6-7" fill="none" stroke="#20a040" stroke-width="1.6" /><circle cx="9.5" cy="9.5" r="1.5" fill="#20a040"/><circle cx="14.5" cy="14" r="1.5" fill="#20a040"/></svg>
<svg class="a" style="left:713px;top:72px" width="17" height="17" viewBox="0 0 16 16"><rect x="0.5" y="0.5" width="10" height="12" fill="#ffffff" stroke="#4a6aa0" stroke-width="1" shape-rendering="crispEdges"/><rect x="2.0" y="3.5" width="7" height="1" fill="#6090d0" shape-rendering="crispEdges"/><rect x="2.0" y="5.5" width="7" height="1" fill="#6090d0" shape-rendering="crispEdges"/><rect x="2.0" y="7.5" width="7" height="1" fill="#6090d0" shape-rendering="crispEdges"/><rect x="1.0" y="8.5" width="9" height="3.5" fill="#c0d8f0" shape-rendering="crispEdges"/><path d="M8 14.5c0-3.5 1.5-5 4-5s4 1.5 4 5z" fill="#e03030" stroke="#202040" stroke-width="0.6" /><circle cx="12" cy="6" r="2.2" fill="#f4c090"/><path d="M9.8 5.7a2.2 2.2 0 0 1 4.4 0" fill="#402010" /><path d="M4 17.5c0-3.5 1.5-5 4-5s4 1.5 4 5z" fill="#2a5ad0" stroke="#202040" stroke-width="0.6" /><circle cx="8" cy="9" r="2.2" fill="#f4c090"/><path d="M5.8 8.7a2.2 2.2 0 0 1 4.4 0" fill="#402010" /></svg>
<svg class="a" style="left:737px;top:72px" width="17" height="17" viewBox="0 0 16 16"><rect x="0.5" y="0.5" width="14" height="15" fill="#40b040" stroke="#207020" stroke-width="1" shape-rendering="crispEdges"/><rect x="4" y="3" width="3" height="2" fill="#e0f0e0" shape-rendering="crispEdges"/><rect x="8" y="7" width="3" height="2" fill="#e0f0e0" shape-rendering="crispEdges"/><rect x="8" y="11" width="3" height="2" fill="#e0f0e0" shape-rendering="crispEdges"/><path d="M5 5v7h3M5 8h3" fill="none" stroke="#105010" stroke-width="1" /></svg>
<svg class="a" style="left:757px;top:85px" width="8" height="5" viewBox="0 0 7 4"><path d="M0 0h7l-3.5 4z" fill="#222" /></svg>
<div class="a" style="left:775px;top:74px;width:3px;height:1px;background:#b8b0a0"></div><div class="a" style="left:775px;top:76px;width:3px;height:1px;background:#b8b0a0"></div><div class="a" style="left:775px;top:78px;width:3px;height:1px;background:#b8b0a0"></div><div class="a" style="left:775px;top:80px;width:3px;height:1px;background:#b8b0a0"></div><div class="a" style="left:775px;top:82px;width:3px;height:1px;background:#b8b0a0"></div><div class="a" style="left:775px;top:84px;width:3px;height:1px;background:#b8b0a0"></div><div class="a" style="left:775px;top:86px;width:3px;height:1px;background:#b8b0a0"></div><div class="a" style="left:775px;top:88px;width:3px;height:1px;background:#b8b0a0"></div>
<svg class="a" style="left:783px;top:72px" width="17" height="17" viewBox="0 0 16 16"><rect x="0.5" y="1.5" width="10" height="11" fill="#ffffff" stroke="#707070" stroke-width="1" shape-rendering="crispEdges"/><text x="1.5" y="11" font-size="10" font-family="Liberation Sans" fill="#202020">Σ</text><path d="M11 3h4v6h-4z" fill="#2a5ad0" /><circle cx="13" cy="2.5" r="2" fill="#f0c8a0"/><rect x="9" y="10" width="5" height="5" fill="#e01818" shape-rendering="crispEdges"/></svg>
<svg class="a" style="left:806px;top:72px" width="17" height="17" viewBox="0 0 16 16"><rect x="0.5" y="1.5" width="10" height="11" fill="#ffffff" stroke="#707070" stroke-width="1" shape-rendering="crispEdges"/><text x="1.5" y="11" font-size="10" font-family="Liberation Sans" fill="#202020">Σ</text><circle cx="12" cy="3" r="2" fill="#f0c8a0"/><path d="M8 10c0-4 2-5 4-5s4 1 4 5z" fill="#e03030" /><rect x="9" y="11" width="6" height="5" fill="#2050c0" shape-rendering="crispEdges"/></svg>
<svg class="a" style="left:829px;top:72px" width="17" height="17" viewBox="0 0 16 16"><rect x="0.5" y="1.5" width="10" height="11" fill="#ffffff" stroke="#707070" stroke-width="1" shape-rendering="crispEdges"/><text x="1.5" y="11" font-size="10" font-family="Liberation Sans" fill="#202020">Σ</text><path d="M8 13.5c0-3.5 1.5-5 4-5s4 1.5 4 5z" fill="#2a5ad0" stroke="#202040" stroke-width="0.6" /><circle cx="12" cy="5" r="2.2" fill="#f4c090"/><path d="M9.8 4.7a2.2 2.2 0 0 1 4.4 0" fill="#402010" /><path d="M4 16.5c0-3.5 1.5-5 4-5s4 1.5 4 5z" fill="#e04040" stroke="#202040" stroke-width="0.6" /><circle cx="8" cy="8" r="2.2" fill="#f4c090"/><path d="M5.8 7.7a2.2 2.2 0 0 1 4.4 0" fill="#402010" /></svg>
<svg class="a" style="left:852px;top:72px" width="17" height="17" viewBox="0 0 16 16"><rect x="0.5" y="1.5" width="10" height="11" fill="#ffffff" stroke="#707070" stroke-width="1" shape-rendering="crispEdges"/><text x="1.5" y="11" font-size="10" font-family="Liberation Sans" fill="#202020">Σ</text><rect x="10" y="1" width="5" height="5" fill="#e01818" shape-rendering="crispEdges"/><rect x="7" y="12" width="9" height="4" fill="#3030a0" shape-rendering="crispEdges"/></svg>
<svg class="a" style="left:875px;top:72px" width="17" height="17" viewBox="0 0 16 16"><rect x="0.5" y="1.5" width="10" height="11" fill="#ffffff" stroke="#707070" stroke-width="1" shape-rendering="crispEdges"/><text x="1.5" y="11" font-size="10" font-family="Liberation Sans" fill="#202020">Σ</text><rect x="10" y="1" width="5" height="5" fill="#e01818" shape-rendering="crispEdges"/><rect x="9" y="11" width="6" height="4" fill="#e0a020" shape-rendering="crispEdges"/></svg>
<svg class="a" style="left:898px;top:72px" width="17" height="17" viewBox="0 0 16 16"><rect x="0.5" y="1.5" width="10" height="11" fill="#ffffff" stroke="#707070" stroke-width="1" shape-rendering="crispEdges"/><text x="1.5" y="11" font-size="10" font-family="Liberation Sans" fill="#202020">Σ</text><rect x="10" y="3" width="5" height="5" fill="#e01818" shape-rendering="crispEdges"/><rect x="8" y="11" width="8" height="5" fill="#4080e0" shape-rendering="crispEdges"/></svg>
<svg class="a" style="left:921px;top:72px" width="17" height="17" viewBox="0 0 16 16"><rect x="0.5" y="1.5" width="10" height="11" fill="#ffffff" stroke="#707070" stroke-width="1" shape-rendering="crispEdges"/><text x="1.5" y="11" font-size="10" font-family="Liberation Sans" fill="#202020">Σ</text><rect x="9" y="5" width="6" height="10" fill="#e0e0e0" stroke="#707070" stroke-width="1" shape-rendering="crispEdges"/><rect x="10" y="7" width="4" height="1" fill="#909090" shape-rendering="crispEdges"/><rect x="10" y="9" width="4" height="1" fill="#909090" shape-rendering="crispEdges"/><rect x="10" y="11" width="4" height="1" fill="#909090" shape-rendering="crispEdges"/></svg>
<svg class="a" style="left:944px;top:72px" width="17" height="17" viewBox="0 0 16 16"><rect x="0.5" y="1.5" width="10" height="11" fill="#ffffff" stroke="#707070" stroke-width="1" shape-rendering="crispEdges"/><text x="1.5" y="11" font-size="10" font-family="Liberation Sans" fill="#202020">Σ</text><path d="M7 10l3 3 6-6" fill="none" stroke="#20b040" stroke-width="2.4" /></svg>
<svg class="a" style="left:966px;top:85px" width="8" height="5" viewBox="0 0 7 4"><path d="M0 0h7l-3.5 4z" fill="#222" /></svg>
<div class="a" style="left:0px;top:95px;width:1px;height:717px;background:#808080"></div>
<div class="a" style="left:1px;top:95px;width:1px;height:717px;background:#000"></div>
<div class="a" style="left:0px;top:95px;width:1438px;height:1px;background:#000"></div>
<div class="a" style="left:2px;top:96px;width:1436px;height:18px;background:#d0d0d0"></div>
<div class="a" style="left:2px;top:114px;width:1436px;height:1px;background:#6c6c6c"></div>
<div class="a" style="left:2px;top:115px;width:1436px;height:671px;background:#fffcf8"></div>
<div class="a" style="left:1438px;top:96px;width:1px;height:716px;background:#e0dcd6"></div>
<div class="a" style="left:1439px;top:95px;width:1px;height:717px;background:#fffcf8"></div>
<svg class="a" style="left:3px;top:97px" width="15" height="15" viewBox="0 0 15 15"><rect x=".5" y="7.5" width="8" height="6" rx="1" fill="#d4e8fa" stroke="#3a5aa8"/><rect x="1.5" y="11" width="6" height="2" fill="#a8c8ec"/><g fill="#000"><rect x="4" y="3" width="1" height="1"/><rect x="4" y="5" width="1" height="1"/><rect x="4" y="7" width="1" height="1"/><rect x="6" y="3" width="1" height="1"/><rect x="8" y="3" width="1" height="1"/><path d="M2 9h5l-2.5 2.5z"/></g><path d="M10.5 0l3.2 3.2-3.2 3.2-3.2-3.2z" fill="#f8e840" stroke="#d8b820" stroke-width="0.6"/></svg>
<div class="a" style="left:1384px;top:108px;width:8px;height:2px;background:#202020"></div>
<div class="a" style="left:1405px;top:99px;width:8px;height:8px;border:1px solid #202020;border-top-width:2px;box-sizing:border-box"></div>
<div class="a" style="left:1402px;top:102px;width:8px;height:8px;border:1px solid #202020;border-top-width:2px;box-sizing:border-box;background:#d3d3d3"></div>
<svg class="a" style="left:1424px;top:100px" width="9" height="9" viewBox="0 0 9 9"><path d="M.5 .5l8 8M8.5 .5l-8 8" stroke="#202020" stroke-width="1.7"/></svg>
<div class="a" style="left:123px;top:126px;width:232px;height:22px;background:#fff;border:1px solid #000;box-sizing:border-box"></div>
<div class="a" style="left:354px;top:126px;width:16px;height:22px;background:#e8e3da;border:1px solid #000;box-sizing:border-box"></div>
<div class="a" style="left:369px;top:126px;width:16px;height:22px;background:#e8e3da;border:1px solid #000;box-sizing:border-box"></div>
<div class="a" style="left:357px;top:141px;width:2px;height:2px;background:#4a4020"></div><div class="a" style="left:361px;top:141px;width:2px;height:2px;background:#4a4020"></div><div class="a" style="left:365px;top:141px;width:2px;height:2px;background:#4a4020"></div>
<svg class="a" style="left:373px;top:133px" width="8" height="8" viewBox="0 0 8 8"><path d="M.5 .5l7 7M7.5 .5l-7 7" stroke="#5a5020" stroke-width="1.5"/></svg>
<div class="a" style="left:391px;top:125px;width:210px;height:60px;border:1px solid #c02838;box-sizing:border-box"></div>
<div class="a" style="left:564px;top:140px;width:23px;height:19px;background:#e4e6dc;border:1px solid #000;box-sizing:border-box"></div>
<div class="a" style="left:566px;top:142px;width:19px;height:15px;border:1px dotted #000;box-sizing:border-box"></div>
<svg class="a" style="left:567px;top:143px" width="17" height="13" viewBox="0 0 17 13"><ellipse cx="8.5" cy="6.5" rx="5.5" ry="4.5" fill="#cfeec0"/><path d="M3.5 5.5A5 4 0 0 1 13 4.5M13.5 7.5A5 4 0 0 1 4 8.5" fill="none" stroke="#3a7030" stroke-width="1.4"/><path d="M1 6.5l3-3 2.5 3z M16 6.5l-3 3-2.5-3z" fill="#3a7030"/></svg>
<div class="a" style="left:738px;top:127px;width:185px;height:33px;background:#fff;border:1px solid #000;box-sizing:border-box"></div>
<div class="a" style="left:921px;top:127px;width:16px;height:33px;background:#ebe3dc;border:1px solid #000;box-sizing:border-box"></div>
<svg class="a" style="left:924px;top:137px" width="10" height="11" viewBox="0 0 10 11"><rect x=".5" y=".5" width="9" height="10" fill="#efe2a0" stroke="#8a7020"/><rect x="2" y="2" width="6" height="2" fill="#c0a040"/><path d="M1 5.5h8M1 7.5h8M3.5 5v6M6.5 5v6" stroke="#8a7020" stroke-width="1"/></svg>
<svg class="a" style="left:21px;top:190px" width="13" height="13" viewBox="0 0 13 13"><path d="M2 2l9 9M11 2l-9 9" stroke="#c85060" stroke-width="3.2" stroke-linecap="round"/><path d="M2 2l9 9M11 2l-9 9" stroke="#f08a90" stroke-width="2" stroke-linecap="round"/></svg>
<div class="a" style="left:41px;top:187px;width:1px;height:18px;background:#d0c8c0"></div>
<svg class="a" style="left:49px;top:189px" width="15" height="14" viewBox="0 0 15 14"><path d="M0.5 7.5l2.5-1.5 2.5 3c2-4 5-7 9-9-3 3-6 7-8.5 13z" fill="#12b428" stroke="#0a8a18" stroke-width="0.5"/></svg>
<div class="a" style="left:16px;top:215px;width:1408px;height:557px;background:#fff"></div>
<div class="a" style="left:17px;top:216px;width:1406px;height:23px;background:linear-gradient(#f9f1e2,#f5f3de)"></div>
<div class="a" style="left:181px;top:216px;width:180px;height:23px;background:#d0cfb8"></div>
<div class="a" style="left:181px;top:284px;width:180px;height:21px;background:#5366c3"></div>
<div class="a" style="left:17px;top:748px;width:1406px;height:23px;background:#eee6dc"></div>
<div class="a" style="left:16px;top:215px;width:1408px;height:1px;background:#000"></div>
<div class="a" style="left:16px;top:239px;width:1408px;height:1px;background:#000"></div>
<div class="a" style="left:16px;top:261px;width:1408px;height:1px;background:#000"></div>
<div class="a" style="left:16px;top:283px;width:1408px;height:1px;background:#000"></div>
<div class="a" style="left:16px;top:305px;width:1408px;height:1px;background:#000"></div>
<div class="a" style="left:16px;top:747px;width:1408px;height:1px;background:#000"></div>
<div class="a" style="left:16px;top:771px;width:1408px;height:1px;background:#000"></div>
<div class="a" style="left:16px;top:215px;width:1px;height:91px;background:#000"></div>
<div class="a" style="left:16px;top:747px;width:1px;height:25px;background:#000"></div>
<div class="a" style="left:52px;top:215px;width:1px;height:91px;background:#000"></div>
<div class="a" style="left:52px;top:747px;width:1px;height:25px;background:#000"></div>
<div class="a" style="left:180px;top:215px;width:1px;height:91px;background:#000"></div>
<div class="a" style="left:180px;top:747px;width:1px;height:25px;background:#000"></div>
<div class="a" style="left:361px;top:215px;width:1px;height:91px;background:#000"></div>
<div class="a" style="left:361px;top:747px;width:1px;height:25px;background:#000"></div>
<div class="a" style="left:867px;top:215px;width:1px;height:91px;background:#000"></div>
<div class="a" style="left:867px;top:747px;width:1px;height:25px;background:#000"></div>
<div class="a" style="left:962px;top:215px;width:1px;height:91px;background:#000"></div>
<div class="a" style="left:962px;top:747px;width:1px;height:25px;background:#000"></div>
<div class="a" style="left:1098px;top:215px;width:1px;height:91px;background:#000"></div>
<div class="a" style="left:1098px;top:747px;width:1px;height:25px;background:#000"></div>
<div class="a" style="left:1251px;top:215px;width:1px;height:91px;background:#000"></div>
<div class="a" style="left:1251px;top:747px;width:1px;height:25px;background:#000"></div>
<div class="a" style="left:1423px;top:215px;width:1px;height:91px;background:#000"></div>
<div class="a" style="left:1423px;top:747px;width:1px;height:25px;background:#000"></div>
<div class="a" style="left:16px;top:215px;width:1px;height:557px;background:#000"></div>
<div class="a" style="left:1423px;top:215px;width:1px;height:557px;background:#000"></div>
<div class="a" style="left:2px;top:786px;width:1436px;height:1px;background:#000"></div>
<div class="a" style="left:2px;top:787px;width:1436px;height:25px;background:#eee7dd"></div>
<svg class="a" style="left:642px;top:790px" width="17" height="17" viewBox="0 0 16 16"><rect x="1" y="1" width="9" height="4" fill="#3428b0" shape-rendering="crispEdges"/><path d="M10 1l1.5-1.5v4l-1.5 1.5z" fill="#000040" /><rect x="2.5" y="2.5" width="1" height="1" fill="#ffffff" shape-rendering="crispEdges"/><rect x="4.5" y="2.5" width="1" height="1" fill="#ffffff" shape-rendering="crispEdges"/><rect x="6.5" y="2.5" width="1" height="1" fill="#ffffff" shape-rendering="crispEdges"/><path d="M5 11h6v-6z" fill="#90d820" stroke="#1a5a00" stroke-width="0.8" /><path d="M4 4l5 5" fill="none" stroke="#1a5a00" stroke-width="1.2" /><rect x="6" y="12" width="9" height="4" fill="#e87828" shape-rendering="crispEdges"/><path d="M15 12l1.5-1.5v4l-1.5 1.5z" fill="#000040" /><rect x="7.5" y="13.5" width="1" height="1" fill="#ffffff" shape-rendering="crispEdges"/><rect x="9.5" y="13.5" width="1" height="1" fill="#ffffff" shape-rendering="crispEdges"/><rect x="11.5" y="13.5" width="1" height="1" fill="#ffffff" shape-rendering="crispEdges"/></svg>
<svg class="a" style="left:831px;top:791px" width="16" height="16" viewBox="0 0 16 16"><path d="M1 4h9" fill="none" stroke="#20b020" stroke-width="2.2" /><path d="M5 10h9v5H5z" fill="#d8d8d0" stroke="#a0a090" stroke-width="1" /><rect x="6" y="5" width="9" height="10" fill="#e8e8e0" shape-rendering="crispEdges"/><ellipse cx="11" cy="7.5" rx="3" ry="1.5" fill="#f0d040" stroke="#806010" stroke-width="0.7"/><ellipse cx="11" cy="10.5" rx="3" ry="1.5" fill="#f0d040" stroke="#806010" stroke-width="0.7"/><ellipse cx="11" cy="13.5" rx="3" ry="1.5" fill="#f0d040" stroke="#806010" stroke-width="0.7"/></svg>
<svg class="a" style="left:1004px;top:790px" width="17" height="17" viewBox="0 0 16 16"><path d="M5 1v9M1 5h9" fill="none" stroke="#20b020" stroke-width="2.2" /><path d="M5 10h9v5H5z" fill="#d8d8d0" stroke="#a0a090" stroke-width="1" /><ellipse cx="11" cy="8.5" rx="3" ry="1.5" fill="#f0d040" stroke="#806010" stroke-width="0.7"/><ellipse cx="11" cy="11.5" rx="3" ry="1.5" fill="#f0d040" stroke="#806010" stroke-width="0.7"/><ellipse cx="11" cy="14.5" rx="3" ry="1.5" fill="#f0d040" stroke="#806010" stroke-width="0.7"/></svg>
<svg class="a" style="left:1180px;top:790px" width="17" height="17" viewBox="0 0 16 16"><rect x="1" y="1" width="9" height="4" fill="#3428b0" shape-rendering="crispEdges"/><path d="M10 1l1.5-1.5v4l-1.5 1.5z" fill="#000040" /><rect x="2.5" y="2.5" width="1" height="1" fill="#ffffff" shape-rendering="crispEdges"/><rect x="4.5" y="2.5" width="1" height="1" fill="#ffffff" shape-rendering="crispEdges"/><rect x="6.5" y="2.5" width="1" height="1" fill="#ffffff" shape-rendering="crispEdges"/><path d="M6 11h6v-6z" fill="#90d820" stroke="#1a5a00" stroke-width="0.8" /><path d="M5 4l5 5" fill="none" stroke="#1a5a00" stroke-width="1.2" /><rect x="10" y="11" width="5" height="5" fill="#e01818" stroke="#900000" stroke-width="0.6" shape-rendering="crispEdges"/></svg>
<div class="a" style="left:824px;top:791px;width:1px;height:17px;background:#cdc5ba"></div>
<div class="a" style="left:998px;top:791px;width:1px;height:17px;background:#cdc5ba"></div>
<div class="a" style="left:1173px;top:791px;width:1px;height:17px;background:#cdc5ba"></div>
<div class="a" style="left:1362px;top:791px;width:1px;height:17px;background:#cdc5ba"></div>
<div class="a" style="left:0px;top:812px;width:1440px;height:46px;background:#eee7dd"></div>
<div class="a" style="left:0px;top:812px;width:1440px;height:2px;background:#fbf8f2"></div>
<div class="a" style="left:1px;top:814px;width:172px;height:20px;background:#bdbdbd;border:1px solid #a8a8a0;box-sizing:border-box"></div>
<div class="a" style="left:174px;top:814px;width:172px;height:20px;background:#b3cde6;border:1px solid #8c9088;box-sizing:border-box"></div>
<svg class="a" style="left:4px;top:818px" width="13" height="12" viewBox="0 0 13 12"><rect x=".5" y=".5" width="12" height="11" fill="#fff" stroke="#8090a0"/><rect x="1" y="1" width="11" height="2" fill="#d8e0a8"/><path d="M4.5 1v10M8.5 1v10" stroke="#8090a0"/></svg>
<svg class="a" style="left:176px;top:816px" width="15" height="15" viewBox="0 0 15 15"><rect x=".5" y="7.5" width="8" height="6" rx="1" fill="#d4e8fa" stroke="#3a5aa8"/><rect x="1.5" y="11" width="6" height="2" fill="#a8c8ec"/><g fill="#000"><rect x="4" y="3" width="1" height="1"/><rect x="4" y="5" width="1" height="1"/><rect x="4" y="7" width="1" height="1"/><rect x="6" y="3" width="1" height="1"/><rect x="8" y="3" width="1" height="1"/><path d="M2 9h5l-2.5 2.5z"/></g><path d="M10.5 0l3.2 3.2-3.2 3.2-3.2-3.2z" fill="#f8e840" stroke="#d8b820" stroke-width="0.6"/></svg>
<div class="a" style="left:0px;top:836px;width:1367px;height:19px;border:1px solid #dcd4c8;border-left:none;box-sizing:border-box"></div>
<div class="a" style="left:1372px;top:836px;width:29px;height:19px;border:1px solid #dcd4c8;box-sizing:border-box"></div>
<div class="a" style="left:1406px;top:836px;width:34px;height:19px;border:1px solid #dcd4c8;box-sizing:border-box"></div>
<div class="a" style="left:0px;top:855px;width:1440px;height:3px;background:#faf8f4"></div>
<div class="a" style="left:0px;top:858px;width:1440px;height:42px;background:#c4c3c7"></div>
<div class="a" style="left:0px;top:858px;width:1440px;height:1px;background:#e8e8e8"></div>
<div class="a" style="left:2px;top:860px;width:51px;height:38px;background:#c4c3c7;border-top:1px solid #fff;border-left:1px solid #fff;border-right:2px solid #000;border-bottom:2px solid #000;box-sizing:border-box"></div>
<svg class="a" style="left:4px;top:870px" width="16" height="15" viewBox="0 0 16 15"><path d="M1 2c2-1 4-1 6 0l-1 5c-2-1-4-1-6 0z" fill="#f05020"/><path d="M8 2c2 1 4 1 6 0l-1 5c-2 1-4 1-6 0z" fill="#60b030"/><path d="M0 8c2-1 4-1 6 0l-1 5c-2-1-4-1-6 0z" fill="#2080e0"/><path d="M7 8c2 1 4 1 6 0l-1 5c-2 1-4 1-6 0z" fill="#f8c020"/></svg>
<div class="a" style="left:62px;top:860px;width:160px;height:38px;background:#fff;border-top:2px solid #000;border-left:2px solid #000;border-right:1px solid #fff;border-bottom:1px solid #fff;box-sizing:border-box"></div>
<svg class="a" style="left:67px;top:864px" width="29" height="29" viewBox="0 0 29 29"><circle cx="14.5" cy="14.5" r="14" fill="#f4d060"/><circle cx="14.5" cy="11" r="10" fill="#fbe8a0"/><path d="M4.5 11l4-3v11" fill="none" stroke="#e02000" stroke-width="3"/><path d="M23 11a5.5 5 0 1 0 0 6h4M23 13.5h-6" fill="none" stroke="#e82000" stroke-width="2.2"/></svg>
<div class="a" style="left:1347px;top:866px;width:1px;height:22px;background:#909090"></div>
<div class="a" style="left:1348px;top:866px;width:1px;height:22px;background:#fff"></div>
<div class="a" style="left:1350px;top:860px;width:88px;height:38px;border-top:1px solid #909090;border-left:1px solid #909090;border-right:1px solid #fff;border-bottom:1px solid #fff;box-sizing:border-box"></div>
<svg class="a" style="left:1421px;top:873px" width="14" height="12" viewBox="0 0 14 12"><rect x="0" y="0" width="14" height="10" fill="#3070d0"/><rect x="0" y="0" width="14" height="3" fill="#80b0f0"/><rect x="0" y="9" width="14" height="3" fill="#206040"/></svg>
<div class="t" style="left:19.0px;top:3px;font-size:12px;line-height:12px;font-weight:bold;color:#fff;">&quot;Управление торговлей&quot;, редакция 10.3 / Администратор</div>
<div class="t" style="left:16.2px;top:26px;font-size:11px;line-height:11px;transform:scaleX(1.0833);transform-origin:0 0;color:#2b2414;">Файл</div>
<div class="t" style="left:60.0px;top:26px;font-size:11px;line-height:11px;transform:scaleX(1.0330);transform-origin:0 0;color:#2b2414;">Правка</div>
<div class="t" style="left:110.5px;top:26px;font-size:11px;line-height:11px;transform:scaleX(0.9617);transform-origin:0 0;color:#2b2414;">Операции</div>
<div class="t" style="left:169.7px;top:26px;font-size:11px;line-height:11px;transform:scaleX(0.9889);transform-origin:0 0;color:#2b2414;">Справочники</div>
<div class="t" style="left:245.0px;top:26px;font-size:11px;line-height:11px;transform:scaleX(1.0229);transform-origin:0 0;color:#2b2414;">Документы</div>
<div class="t" style="left:313.0px;top:26px;font-size:11px;line-height:11px;transform:scaleX(0.9466);transform-origin:0 0;color:#2b2414;">Отчеты</div>
<div class="t" style="left:361.3px;top:26px;font-size:11px;line-height:11px;transform:scaleX(0.9742);transform-origin:0 0;color:#2b2414;">Сервис</div>
<div class="t" style="left:413.0px;top:26px;font-size:11px;line-height:11px;transform:scaleX(1.0367);transform-origin:0 0;color:#2b2414;">Окна</div>
<div class="t" style="left:454.8px;top:26px;font-size:11px;line-height:11px;transform:scaleX(0.9778);transform-origin:0 0;color:#2b2414;">Справка</div>
<div class="t" style="left:24.0px;top:99px;font-size:12px;line-height:12px;font-weight:bold;transform:scaleX(0.9903);transform-origin:0 0;color:#000;">Обработка  АРМ</div>
<div class="t" style="left:16.7px;top:130px;font-size:14px;line-height:14px;transform:scaleX(1.0212);transform-origin:0 0;color:#2a2410;">Покупатель:</div>
<div class="t" style="left:126.7px;top:130px;font-size:14px;line-height:14px;color:#000;">Касьянов Александр</div>
<div class="t" style="left:392.9px;top:132px;font-size:13px;line-height:13px;font-weight:bold;transform:scaleX(1.1150);transform-origin:0 0;color:#2e2812;">Остаток  4 213,00</div>
<div class="t" style="left:392.9px;top:156px;font-size:13px;line-height:13px;font-weight:bold;transform:scaleX(1.1703);transform-origin:0 0;color:#2e2812;">Разница</div>
<div class="t" style="left:604.9px;top:136px;font-size:13px;line-height:13px;font-weight:bold;transform:scaleX(1.1069);transform-origin:0 0;color:#2e2812;">Сумма ПКО/РКО:</div>
<div class="t" style="left:826.7px;top:133px;font-size:20px;line-height:20px;font-weight:bold;transform:scaleX(1.1909);transform-origin:0 0;color:#3b3a80;">4 113,00</div>
<div class="t" style="left:67.0px;top:189px;font-size:13px;line-height:13px;font-weight:bold;transform:scaleX(1.1253);transform-origin:0 0;color:#2e2812;">Заполнить</div>
<div class="t" style="left:21.0px;top:220px;font-size:13px;line-height:13px;transform:scaleX(0.9052);transform-origin:0 0;color:#3e3010;">N</div>
<div class="t" style="left:57.0px;top:220px;font-size:13px;line-height:13px;transform:scaleX(1.1141);transform-origin:0 0;color:#3e3010;">Артикул</div>
<div class="t" style="left:185.4px;top:220px;font-size:13px;line-height:13px;transform:scaleX(1.0671);transform-origin:0 0;color:#3e3010;">Бренд</div>
<div class="t" style="left:366.3px;top:220px;font-size:13px;line-height:13px;transform:scaleX(1.1072);transform-origin:0 0;color:#3e3010;">Номенклатура</div>
<div class="t" style="left:873.3px;top:220px;font-size:13px;line-height:13px;transform:scaleX(1.0584);transform-origin:0 0;color:#3e3010;">Единица из...</div>
<div class="t" style="left:967.5px;top:220px;font-size:13px;line-height:13px;transform:scaleX(1.0958);transform-origin:0 0;color:#3e3010;">Количество</div>
<div class="t" style="left:1103.3px;top:220px;font-size:13px;line-height:13px;transform:scaleX(1.0395);transform-origin:0 0;color:#3e3010;">Цена</div>
<div class="t" style="left:1256.0px;top:220px;font-size:13px;line-height:13px;transform:scaleX(1.0463);transform-origin:0 0;color:#3e3010;">Сумма</div>
<div class="t" style="left:40.8px;top:245px;font-size:13px;line-height:13px;color:#000;">1</div>
<div class="t" style="left:57.0px;top:245px;font-size:13px;line-height:13px;transform:scaleX(0.9789);transform-origin:0 0;color:#000;">SE-B011</div>
<div class="t" style="left:185.4px;top:245px;font-size:13px;line-height:13px;transform:scaleX(0.8985);transform-origin:0 0;color:#000;">555</div>
<div class="t" style="left:366.3px;top:245px;font-size:13px;line-height:13px;transform:scaleX(1.0693);transform-origin:0 0;color:#000;">SEB011 Наконечник рулевой 555</div>
<div class="t" style="left:873.3px;top:245px;font-size:13px;line-height:13px;transform:scaleX(0.8236);transform-origin:0 0;color:#000;">шт</div>
<div class="t" style="left:1063.5px;top:245px;font-size:13px;line-height:13px;transform:scaleX(0.9217);transform-origin:0 0;color:#000;">2,000</div>
<div class="t" style="left:1209.2px;top:245px;font-size:13px;line-height:13px;transform:scaleX(0.9380);transform-origin:0 0;color:#000;">630,00</div>
<div class="t" style="left:1371.2px;top:245px;font-size:13px;line-height:13px;transform:scaleX(0.9287);transform-origin:0 0;color:#000;">1 260,00</div>
<div class="t" style="left:40.8px;top:267px;font-size:13px;line-height:13px;color:#000;">2</div>
<div class="t" style="left:57.0px;top:267px;font-size:13px;line-height:13px;transform:scaleX(0.9964);transform-origin:0 0;color:#000;">GPRH-015-S</div>
<div class="t" style="left:185.4px;top:267px;font-size:13px;line-height:13px;transform:scaleX(1.0160);transform-origin:0 0;color:#000;">ONNURI</div>
<div class="t" style="left:366.3px;top:267px;font-size:13px;line-height:13px;transform:scaleX(1.0424);transform-origin:0 0;color:#000;">Кольца поршневые (комплект) СТД.</div>
<div class="t" style="left:600.0px;top:267px;font-size:13px;line-height:13px;transform:scaleX(1.0137);transform-origin:0 0;color:#000;">HYUNDAI: SONATA, SANTAMO 2.0l DOH...</div>
<div class="t" style="left:873.3px;top:267px;font-size:13px;line-height:13px;transform:scaleX(0.8236);transform-origin:0 0;color:#000;">шт</div>
<div class="t" style="left:1063.5px;top:267px;font-size:13px;line-height:13px;transform:scaleX(0.9217);transform-origin:0 0;color:#000;">1,000</div>
<div class="t" style="left:1199.9px;top:267px;font-size:13px;line-height:13px;transform:scaleX(0.9208);transform-origin:0 0;color:#000;">1 949,00</div>
<div class="t" style="left:1371.2px;top:267px;font-size:13px;line-height:13px;transform:scaleX(0.9287);transform-origin:0 0;color:#000;">1 949,00</div>
<div class="t" style="left:40.8px;top:289px;font-size:13px;line-height:13px;color:#000;">3</div>
<div class="t" style="left:57.0px;top:289px;font-size:13px;line-height:13px;transform:scaleX(0.9747);transform-origin:0 0;color:#000;">MR272946</div>
<div class="t" style="left:185.4px;top:289px;font-size:13px;line-height:13px;color:#fff;">MITSUBISHI</div>
<div class="t" style="left:366.3px;top:289px;font-size:13px;line-height:13px;transform:scaleX(1.0920);transform-origin:0 0;color:#000;">Подшипник опоры амортизатора переднего</div>
<div class="t" style="left:873.3px;top:289px;font-size:13px;line-height:13px;transform:scaleX(0.8236);transform-origin:0 0;color:#000;">шт</div>
<div class="t" style="left:1063.5px;top:289px;font-size:13px;line-height:13px;transform:scaleX(0.9217);transform-origin:0 0;color:#000;">2,000</div>
<div class="t" style="left:1209.2px;top:289px;font-size:13px;line-height:13px;transform:scaleX(0.9380);transform-origin:0 0;color:#000;">502,00</div>
<div class="t" style="left:1371.2px;top:289px;font-size:13px;line-height:13px;transform:scaleX(0.9287);transform-origin:0 0;color:#000;">1 004,00</div>
<div class="t" style="left:1364.0px;top:752px;font-size:13px;line-height:13px;font-weight:bold;transform:scaleX(1.0670);transform-origin:0 0;color:#3a3010;">4 213,00</div>
<div class="t" style="left:661.0px;top:792px;font-size:13px;line-height:13px;font-weight:bold;transform:scaleX(1.1649);transform-origin:0 0;color:#2e2812;">Возврат покупателю</div>
<div class="t" style="left:849.9px;top:792px;font-size:13px;line-height:13px;font-weight:bold;transform:scaleX(1.1365);transform-origin:0 0;color:#2e2812;">Создать расходник</div>
<div class="t" style="left:1023.0px;top:792px;font-size:13px;line-height:13px;font-weight:bold;transform:scaleX(1.1400);transform-origin:0 0;color:#2e2812;">Создать приходник</div>
<div class="t" style="left:1198.9px;top:792px;font-size:13px;line-height:13px;font-weight:bold;transform:scaleX(1.1486);transform-origin:0 0;color:#2e2812;">Создать реализацию</div>
<div class="t" style="left:1371.0px;top:792px;font-size:13px;line-height:13px;font-weight:bold;transform:scaleX(1.0923);transform-origin:0 0;color:#2e2812;">Закрыть</div>
<div class="t" style="left:21.2px;top:818px;font-size:12px;line-height:12px;transform:scaleX(0.9008);transform-origin:0 0;color:#222;">Дополнительные внешние ...</div>
<div class="t" style="left:193.8px;top:818px;font-size:12px;line-height:12px;transform:scaleX(0.8865);transform-origin:0 0;color:#1b2540;">Обработка  АРМ</div>
<div class="t" style="left:5.0px;top:840px;font-size:12px;line-height:12px;transform:scaleX(0.9164);transform-origin:0 0;color:#2b2414;">Для получения подсказки нажмите F1</div>
<div class="t" style="left:1375.9px;top:841px;font-size:11px;line-height:11px;transform:scaleX(0.8751);transform-origin:0 0;color:#a09878;">CAP</div>
<div class="t" style="left:1409.3px;top:841px;font-size:11px;line-height:11px;transform:scaleX(0.9536);transform-origin:0 0;color:#2b2414;">NUM</div>
<div class="t" style="left:21.0px;top:873px;font-size:12px;line-height:12px;font-weight:bold;transform:scaleX(0.9752);transform-origin:0 0;color:#000;">Пуск</div>
<div class="t" style="left:101.9px;top:873px;font-size:12px;line-height:12px;font-weight:bold;color:#000;">&quot;Управление торг...</div>
<div class="t" style="left:1326.7px;top:872px;font-size:11px;line-height:11px;transform:scaleX(0.8999);transform-origin:0 0;color:#000;">RU</div>
<div class="t" style="left:1371.4px;top:866px;font-size:11px;line-height:11px;transform:scaleX(0.9662);transform-origin:0 0;color:#000;">16:09</div>
<div class="t" style="left:1357.0px;top:881px;font-size:11px;line-height:11px;color:#000;">02.08.2018</div>
</body></html>
